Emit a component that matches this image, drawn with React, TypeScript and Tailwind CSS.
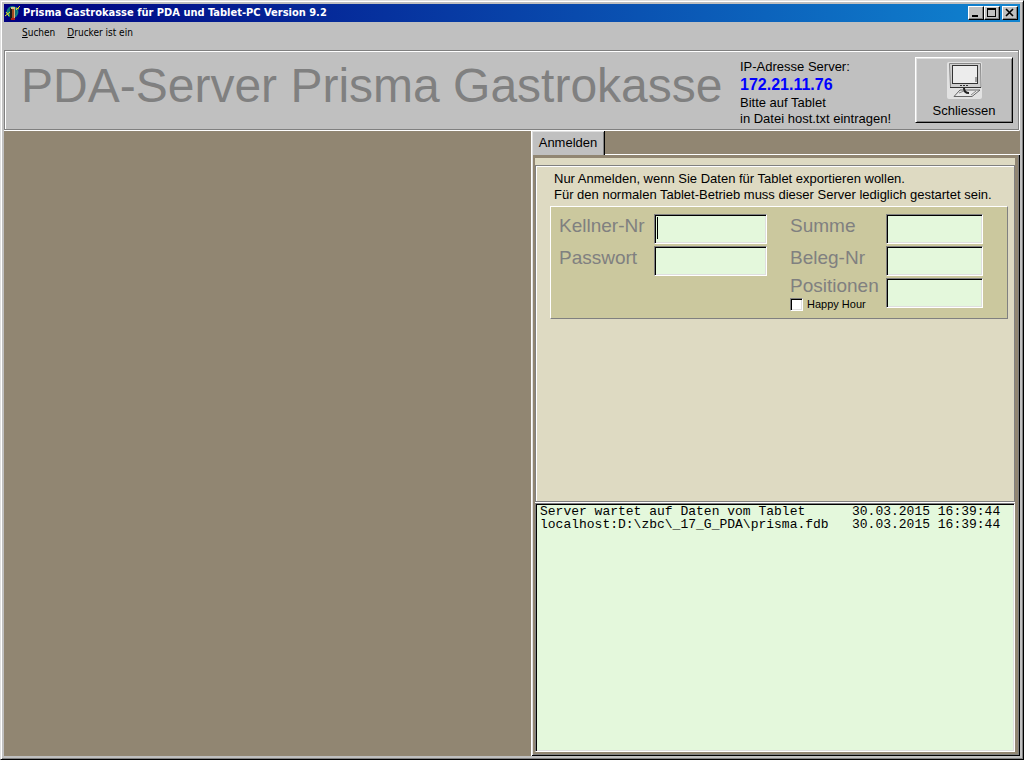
import { useState } from "react";
import type { ReactNode } from "react";

const logRows = [
  { text: "Server wartet auf Daten vom Tablet", time: "30.03.2015 16:39:44" },
  { text: "localhost:D:\\zbc\\_17_G_PDA\\prisma.fdb", time: "30.03.2015 16:39:44" },
];

const AppIcon = () => (
  <svg width="16" height="16" viewBox="0 0 16 16" aria-hidden="true">
    <circle cx="7.5" cy="7" r="6" fill="#0b6f78" />
    <circle cx="7.5" cy="7" r="5" fill="none" stroke="#178a8a" />
    <path d="M5 3 H7 V15 H5 Z" fill="#1a1a1a" />
    <path d="M6 2 H10 V4 H6 Z" fill="#d8c08a" />
    <path d="M7 4 H9 V13 H7 Z" fill="#a04a20" />
    <path d="M9 4 H10 V13 H9 Z" fill="#d8b080" />
    <path d="M6 13 H10 V15 H6 Z" fill="#b01818" />
    <path d="M0 11 L5 7 M1 7 L4 11 M11 5 L15 1 M11 3 L14 4" stroke="#e8e81c" />
  </svg>
);

const MonitorIcon = () => (
  <svg width="35" height="37" viewBox="0 0 35 37" aria-hidden="true">
    <rect width="35" height="37" rx="2" fill="#e2e2e2" />
    <path d="M2.5 1.5 H33.5 L34 25.5 H3.5 Z" fill="#cfcfcf" stroke="#888" />
    <path d="M3 25.5 H34" stroke="#333" />
    <rect x="5.5" y="3.5" width="25" height="18" fill="#ececec" stroke="#333" />
    <path d="M29 15 V20" stroke="#555" />
    <path d="M13 23.5 H22" stroke="#333" strokeDasharray="2 1" />
    <path d="M13 28 H33 L25 34.5 H7 Z" fill="#e8e8e8" stroke="#666" />
    <path d="M17 26 Q17 31 22 31" fill="none" stroke="#222" strokeWidth="2" />
    <path d="M12 31 L17 29 M24 33 L29 29" stroke="#888" />
  </svg>
);

const CaptionButton = ({ label, children }: { label: string; children: ReactNode }) => (
  <button
    type="button"
    aria-label={label}
    className="flex h-[14px] w-4 items-center justify-center border border-t-white border-l-white border-r-black border-b-black bg-[#c0c0c0] shadow-[inset_-1px_-1px_0_#808080]"
  >
    {children}
  </button>
);

const inputClass =
  "block h-[30px] w-full border border-t-[#808080] border-l-[#808080] border-r-white border-b-white bg-[#e4f8dc] px-1 text-[19px] shadow-[inset_1px_1px_0_#000,inset_-1px_-1px_0_#dfdfdf] outline-none";

const Header = () => (
  <header className="mr-px flex items-start border border-[#808080] bg-[#c0c0c0] pl-4 shadow-[inset_1px_1px_0_#fff,0_1px_0_#fff,1px_0_0_#fff]">
    <h1 className="min-w-0 flex-1 pt-2 text-[48px] leading-[54px] whitespace-nowrap text-[#808080]">
      PDA-Server Prisma Gastrokasse
    </h1>
    <div className="w-[175px] pt-2 text-[13px] leading-4 whitespace-nowrap">
      <p>IP-Adresse Server:</p>
      <p className="text-base leading-5 font-bold text-[#0000ff]">172.21.11.76</p>
      <p>Bitte auf Tablet</p>
      <p>in Datei host.txt eintragen!</p>
    </div>
    <button
      type="button"
      className="mt-[6px] mr-[5px] mb-[6px] flex h-[66px] w-[98px] flex-col items-center border border-t-white border-l-white border-r-black border-b-black pt-1 text-[13px] leading-4 shadow-[inset_1px_1px_0_#dfdfdf,inset_-1px_-1px_0_#808080]"
    >
      <MonitorIcon />
      <span className="pt-1">Schliessen</span>
    </button>
  </header>
);

const LoginForm = () => {
  const [happyHour, setHappyHour] = useState(false);

  return (
    <form className="mr-[6px] ml-[14px] flex h-[113px] items-start justify-between border border-t-white border-l-white border-r-[#808080] border-b-[#808080] bg-[#cbc89e] pt-[7px] pr-6 pl-2 text-[19px] leading-6 text-[#808080]">
      <div className="grid grid-cols-[95px_113px] gap-y-[2px]">
        <label htmlFor="kellner">Kellner-Nr</label>
        <div className="relative">
          <input id="kellner" className={inputClass} />
          <span className="absolute top-[3px] left-[3px] h-[22px] w-px bg-black" />
        </div>
        <label htmlFor="passwort">Passwort</label>
        <input id="passwort" type="password" className={inputClass} />
      </div>
      <div className="grid grid-cols-[96px_97px] gap-y-[2px]">
        <label htmlFor="summe">Summe</label>
        <input id="summe" className={inputClass} />
        <label htmlFor="beleg">Beleg-Nr</label>
        <input id="beleg" className={inputClass} />
        <div className="h-[30px]">
          <label htmlFor="positionen" className="block leading-4">
            Positionen
          </label>
          <label className="flex items-center gap-1 pt-1 text-[11px] leading-[13px] whitespace-nowrap text-black">
            <input
              type="checkbox"
              checked={happyHour}
              onChange={(e) => setHappyHour(e.target.checked)}
              className="h-[13px] w-[13px] appearance-none border border-t-[#808080] border-l-[#808080] border-r-white border-b-white bg-white shadow-[inset_1px_1px_0_#000,inset_-1px_-1px_0_#dfdfdf] checked:bg-black"
            />
            Happy Hour
          </label>
        </div>
        <input id="positionen" className={inputClass} />
      </div>
    </form>
  );
};

const App = () => {
  return (
    <div className="flex min-h-screen flex-col border border-t-[#dfdfdf] border-r-black border-b-black border-l-[#dfdfdf] bg-[#c0c0c0] p-[3px] font-['Liberation_Sans',Arial,sans-serif] text-black shadow-[inset_1px_1px_0_#fff,inset_-1px_-1px_0_#808080]">
      <div className="flex h-[18px] items-center bg-linear-to-r/srgb from-[#000080] to-[#1084d0] pr-[2px] pl-px">
        <AppIcon />
        <span className="flex-1 pl-[2px] font-['DejaVu_Sans_Condensed','DejaVu_Sans',sans-serif] text-[11px] font-bold whitespace-nowrap text-white">
          Prisma Gastrokasse für PDA und Tablet-PC Version 9.2
        </span>
        <CaptionButton label="Minimieren">
          <svg width="12" height="10" viewBox="0 0 12 10">
            <path d="M2 7 H8 V9 H2 Z" fill="#000" />
          </svg>
        </CaptionButton>
        <CaptionButton label="Maximieren">
          <svg width="12" height="10" viewBox="0 0 12 10">
            <path d="M1 0 H10 V9 H1 Z M2 2 V8 H9 V2 Z" fill="#000" fillRule="evenodd" />
          </svg>
        </CaptionButton>
        <div className="pl-[2px]">
          <CaptionButton label="Schließen">
            <svg width="12" height="10" viewBox="0 0 12 10">
              <path d="M2 1 L9 8 M9 1 L2 8" stroke="#000" strokeWidth="1.6" />
            </svg>
          </CaptionButton>
        </div>
      </div>

      <nav className="flex h-7 items-start gap-3 pt-1 pl-[18px] font-['DejaVu_Sans_Condensed','DejaVu_Sans',sans-serif] text-[10px] leading-[13px]">
        <button type="button">
          <span className="underline">S</span>uchen
        </button>
        <button type="button">
          <span className="underline">D</span>rucker ist ein
        </button>
      </nav>

      <Header />

      <main className="mt-px grid flex-1 grid-cols-[minmax(0,527fr)_minmax(0,489fr)] bg-[#918672]">
        <div />
        <section className="flex flex-col border-l border-white">
          <div className="flex h-6 items-stretch">
            <button
              type="button"
              className="w-[73px] border-r border-black bg-[#c0c0c0] text-[13px] leading-4 shadow-[inset_1px_1px_0_#dfdfdf,inset_-1px_0_0_#808080]"
            >
              Anmelden
            </button>
            <div className="flex-1 border-b border-white" />
          </div>
          <div className="flex flex-1 flex-col border-r border-b border-black py-[3px] pr-1 pl-[3px] shadow-[inset_1px_0_0_#dfdfdf,inset_-1px_-1px_0_#808080]">
            <div className="h-[7px] bg-[#dedac2]" />
            <div className="grid flex-1 grid-rows-[minmax(0,338fr)_minmax(0,249fr)]">
              <div className="mb-px border border-[#808080] bg-[#dedac2] shadow-[inset_1px_1px_0_#fff,0_1px_0_#fff]">
                <div className="pt-[5px] pb-[3px] pl-[18px] text-[13px] leading-4 whitespace-nowrap">
                  <p>Nur Anmelden, wenn Sie Daten für Tablet exportieren wollen.</p>
                  <p>Für den normalen Tablet-Betrieb muss dieser Server lediglich gestartet sein.</p>
                </div>
                <LoginForm />
              </div>
              <div className="overflow-hidden border border-t-[#808080] border-l-[#808080] border-r-white border-b-white bg-[#e4f8dc] pt-px pr-[10px] pl-1 shadow-[inset_1px_1px_0_#000,inset_-1px_-1px_0_#dfdfdf]">
                <table className="w-full table-fixed font-['Liberation_Mono','Courier_New',monospace] text-[13px] leading-[13px] whitespace-nowrap">
                  <tbody>
                    {logRows.map((row) => (
                      <tr key={row.text}>
                        <td className="p-0">{row.text}</td>
                        <td className="w-[152px] p-0">{row.time}</td>
                      </tr>
                    ))}
                  </tbody>
                </table>
              </div>
            </div>
          </div>
        </section>
      </main>
    </div>
  );
};

export default App;
